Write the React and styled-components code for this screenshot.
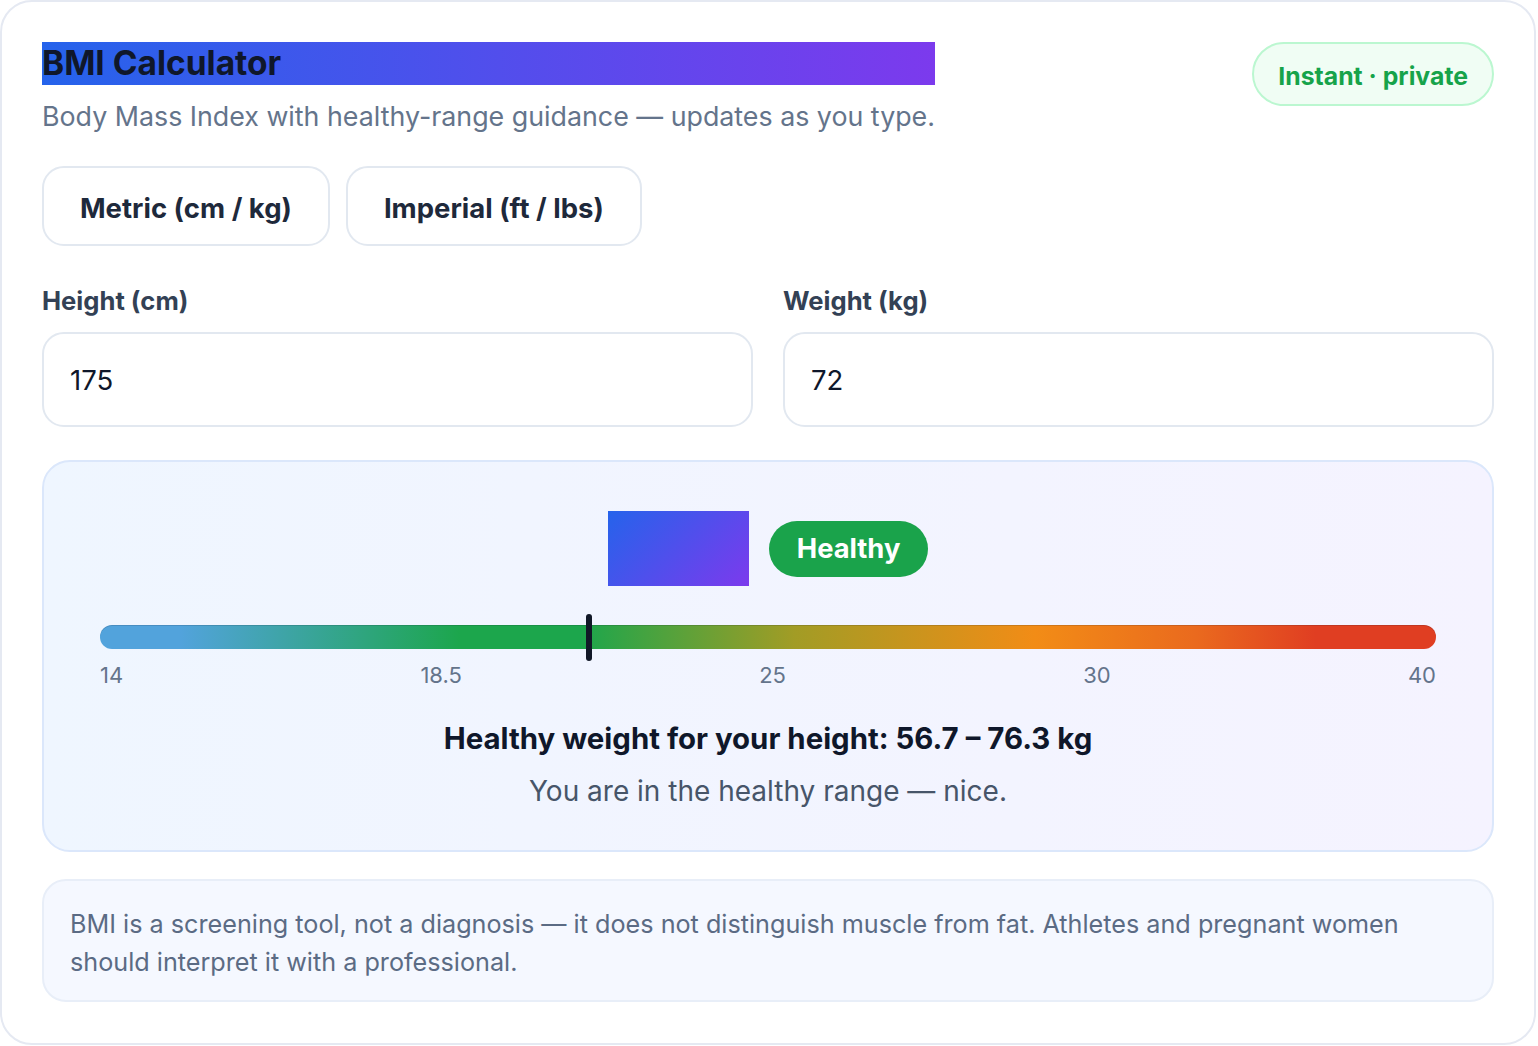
import React, { useState } from 'react';
import styled, { createGlobalStyle } from 'styled-components';

const GlobalStyle = createGlobalStyle`
  * { box-sizing: border-box; }
  body {
    margin: 0;
    background: #ffffff;
    font-family: Inter, "Noto Sans", "Liberation Sans", sans-serif;
    color: #0f172a;
  }
`;

const Card = styled.main`
  width: 1536px;
  min-height: 1045px;
  background: #fff;
  border: 2px solid #e5e9f2;
  border-radius: 32px;
  padding: 40px;
`;

const Header = styled.header`
  display: flex;
  justify-content: space-between;
  align-items: flex-start;
`;

const TitleBlock = styled.div`
  display: flex;
  flex-direction: column;
`;

const Title = styled.h1`
  margin: 0;
  font-size: 33.5px;
  line-height: 43px;
  font-weight: 700;
  color: #0f172a;
  background: linear-gradient(90deg, #2563eb, #7c3aed);
`;

const Subtitle = styled.p`
  margin: 13px 0 0;
  font-size: 26.8px;
  line-height: 36px;
  color: #64748b;
`;

const Pill = styled.span`
  display: inline-block;
  padding: 19px 24px 15px;
  border-radius: 999px;
  border: 2px solid #bbf7d0;
  background: #f0fdf4;
  color: #16a34a;
  font-size: 24.8px;
  line-height: 26px;
  font-weight: 700;
`;

const Tabs = styled.div`
  display: flex;
  gap: 16px;
  margin-top: 32px;
`;

const Tab = styled.button`
  height: 80px;
  padding: 3px 36px 0;
  border-radius: 22px;
  border: 2px solid ${p => (p.$active ? '#e2e8f0' : '#e2e8f0')};
  background: #fff;
  color: #1e293b;
  font-family: inherit;
  font-size: 27.5px;
  font-weight: 700;
  cursor: pointer;
`;

const Fields = styled.div`
  display: grid;
  grid-template-columns: 1fr 1fr;
  gap: 30px;
  margin-top: 38px;
`;

const Field = styled.label`
  display: flex;
  flex-direction: column;
  gap: 15px;
`;

const FieldLabel = styled.span`
  font-size: 25.6px;
  line-height: 33px;
  font-weight: 700;
  color: #334155;
`;

const Input = styled.input`
  height: 95px;
  padding: 0 26px;
  border-radius: 22px;
  border: 2px solid #e2e8f0;
  background: #fff;
  font-family: inherit;
  font-size: 27.5px;
  color: #0f172a;
  outline: none;
`;

const Result = styled.section`
  margin-top: 33px;
  border: 2px solid #dbe7fb;
  border-radius: 28px;
  background: linear-gradient(90deg, #eff6ff, #f5f3ff);
  padding: 49px 56px 40px;
  display: flex;
  flex-direction: column;
  align-items: stretch;
`;

const ValueRow = styled.div`
  display: flex;
  justify-content: center;
  align-items: center;
  gap: 20px;
`;

const Value = styled.div`
  font-size: 62px;
  line-height: 75px;
  font-weight: 800;
  color: transparent;
  background: linear-gradient(135deg, #2563eb, #7c3aed);
`;

const Status = styled.span`
  padding: 0 28px;
  height: 56px;
  display: inline-flex;
  align-items: center;
  border-radius: 999px;
  background: #1aa34b;
  color: #fff;
  font-size: 27.3px;
  font-weight: 700;
`;

const Scale = styled.div`
  margin-top: 39px;
  position: relative;
`;

const Bar = styled.div`
  height: 24px;
  border-radius: 12px;
  box-shadow: inset 0 1px 0 rgba(15, 23, 42, 0.15);
  background: linear-gradient(
    90deg,
    #52a3dc 0%,
    #52a3dc 6%,
    #1ca64c 27%,
    #1ca64c 36%,
    #a29c25 52%,
    #f28c16 70%,
    #ea6a1e 82%,
    #e03e22 91%,
    #e03e22 100%
  );
`;

const Marker = styled.span`
  position: absolute;
  top: -11px;
  width: 6px;
  height: 47px;
  margin-left: -3px;
  border-radius: 3px;
  background: #111827;
`;

const Ticks = styled.div`
  display: flex;
  justify-content: space-between;
  margin-top: 11px;
  font-size: 22px;
  line-height: 30px;
  color: #64748b;
`;

const Range = styled.p`
  margin: 29px 0 0;
  text-align: center;
  font-size: 29.4px;
  line-height: 40px;
  font-weight: 700;
  color: #0f172a;
`;

const Verdict = styled.p`
  margin: 13px 0 0;
  text-align: center;
  font-size: 28px;
  line-height: 38px;
  color: #475569;
`;

const Note = styled.p`
  margin: 27px 0 0;
  padding: 24px 26px 19px;
  border: 2px solid #e8eef8;
  border-radius: 24px;
  background: #f5f8ff;
  font-size: 25.2px;
  line-height: 38px;
  color: #5b6b84;
`;

const MIN = 14;
const MAX = 40;

export default function App() {
  const [mode, setMode] = useState('metric');
  const [height, setHeight] = useState('175');
  const [weight, setWeight] = useState('72');

  const m = Number(height) / 100;
  const bmi = m > 0 ? Number(weight) / (m * m) : 0;
  const pos = Math.min(100, Math.max(0, ((bmi - MIN) / (MAX - MIN)) * 100));
  const low = (18.5 * m * m).toFixed(1);
  const high = (24.9 * m * m).toFixed(1);

  return (
    <>
      <GlobalStyle />
      <Card>
        <Header>
          <TitleBlock>
            <Title>BMI Calculator</Title>
            <Subtitle>Body Mass Index with healthy-range guidance — updates as you type.</Subtitle>
          </TitleBlock>
          <Pill>Instant · private</Pill>
        </Header>

        <Tabs>
          <Tab $active={mode === 'metric'} onClick={() => setMode('metric')}>Metric (cm / kg)</Tab>
          <Tab $active={mode === 'imperial'} onClick={() => setMode('imperial')}>Imperial (ft / lbs)</Tab>
        </Tabs>

        <Fields>
          <Field>
            <FieldLabel>Height (cm)</FieldLabel>
            <Input value={height} onChange={e => setHeight(e.target.value)} />
          </Field>
          <Field>
            <FieldLabel>Weight (kg)</FieldLabel>
            <Input value={weight} onChange={e => setWeight(e.target.value)} />
          </Field>
        </Fields>

        <Result>
          <ValueRow>
            <Value>{bmi.toFixed(1)}</Value>
            <Status>Healthy</Status>
          </ValueRow>
          <Scale>
            <Bar />
            <Marker style={{ left: `${pos}%` }} />
          </Scale>
          <Ticks>
            <span>14</span>
            <span>18.5</span>
            <span>25</span>
            <span>30</span>
            <span>40</span>
          </Ticks>
          <Range>Healthy weight for your height: {low} – {high} kg</Range>
          <Verdict>You are in the healthy range — nice.</Verdict>
        </Result>

        <Note>
          BMI is a screening tool, not a diagnosis — it does not distinguish muscle from fat. Athletes and pregnant women should interpret it with a professional.
        </Note>
      </Card>
    </>
  );
}
